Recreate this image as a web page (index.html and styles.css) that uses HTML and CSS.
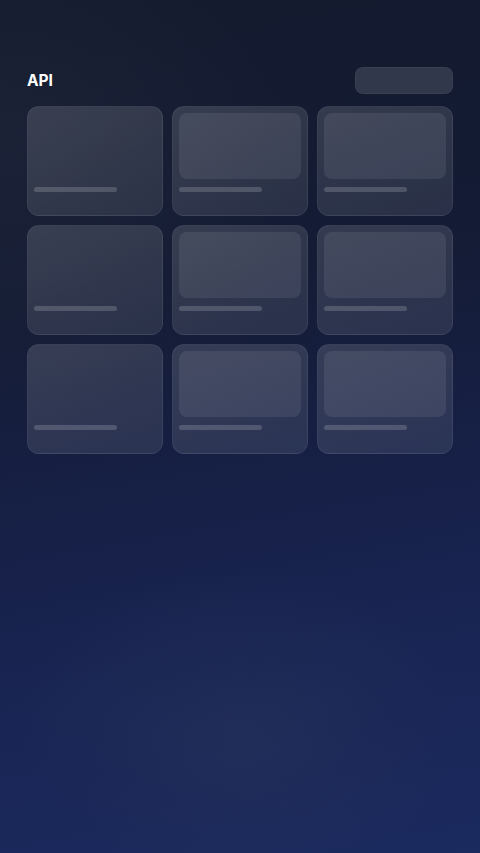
FILE: index.html
```html
<!DOCTYPE html>
<html>
<head>
<meta charset="utf-8">
<link rel="stylesheet" href="styles.css">
</head>
<body>
<div class="page">
  <header class="header">
    <h1 class="title">API</h1>
    <div class="btn"></div>
  </header>
  <div class="grid">
    <div class="card"><div class="thumb empty"></div><div class="bar"></div></div>
    <div class="card"><div class="thumb"></div><div class="bar"></div></div>
    <div class="card"><div class="thumb"></div><div class="bar"></div></div>
    <div class="card"><div class="thumb empty"></div><div class="bar"></div></div>
    <div class="card"><div class="thumb"></div><div class="bar"></div></div>
    <div class="card"><div class="thumb"></div><div class="bar"></div></div>
    <div class="card"><div class="thumb empty"></div><div class="bar"></div></div>
    <div class="card"><div class="thumb"></div><div class="bar"></div></div>
    <div class="card"><div class="thumb"></div><div class="bar"></div></div>
  </div>
</div>
</body>
</html>
```
FILE: styles.css
```css
html, body {
  margin: 0;
  padding: 0;
  height: 100%;
}
body {
  background:
    radial-gradient(ellipse 220px 160px at 240px 730px, rgba(40,52,90,0.5), rgba(40,52,90,0) 100%),
    radial-gradient(ellipse 320px 280px at 0px 140px, rgba(36,42,60,0.45), rgba(36,42,60,0) 100%),
    linear-gradient(170deg, #131a2d 0%, #141c36 35%, #182350 70%, #1b2a5f 100%);
  font-family: Inter, "Liberation Sans", sans-serif;
  min-height: 853px;
}
.page {
  padding: 67px 27px 0;
}
.header {
  display: flex;
  align-items: center;
  justify-content: space-between;
  height: 27px;
  margin-bottom: 12px;
}
.title {
  margin: 0;
  font-size: 15.5px;
  font-weight: 700;
  color: #ffffff;
}
.btn {
  width: 98px;
  height: 27px;
  border-radius: 8px;
  background: rgba(255,255,255,0.13);
  box-shadow: inset 0 0 0 1px rgba(255,255,255,0.04);
}
.grid {
  display: grid;
  grid-template-columns: repeat(3, 136px);
  grid-auto-rows: 110px;
  gap: 9px;
}
.card {
  box-sizing: border-box;
  border-radius: 12px;
  background: linear-gradient(160deg, rgba(255,255,255,0.14), rgba(255,255,255,0.09));
  border: 1px solid rgba(255,255,255,0.06);
  padding: 6px;
  display: flex;
  flex-direction: column;
}
.thumb {
  height: 66px;
  border-radius: 8px;
  background: rgba(255,255,255,0.08);
  margin-bottom: 8px;
}
.thumb.empty {
  background: transparent;
}
.bar {
  width: 83px;
  height: 5px;
  border-radius: 3px;
  background: rgba(255,255,255,0.17);
}
```
